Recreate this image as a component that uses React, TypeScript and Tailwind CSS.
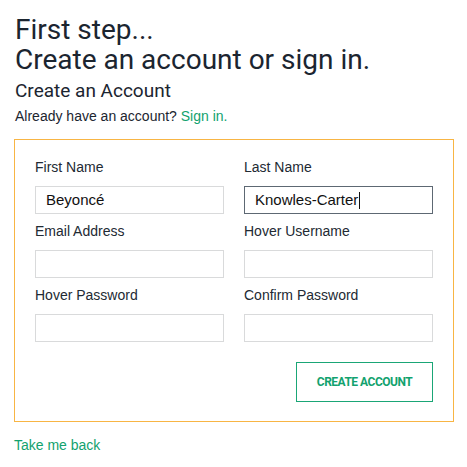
import React from "react";

const Field = ({ label, value, focused }: { label: string; value?: string; focused?: boolean }) => (
  <div className="flex flex-col">
    <div className="text-[14px] leading-[16px] text-[#222a33] mb-[11px]">{label}</div>
    <div
      className={
        "h-[28px] flex items-center pl-[10px] text-[15px] text-[#111] " +
        (focused ? "border border-[#5d6873]" : "border border-[#d9dadb]")
      }
    >
      {value}
      {focused && <span className="inline-block w-px h-[17px] bg-[#111] ml-px" />}
    </div>
  </div>
);

export default function App() {
  return (
    <div className="w-[467px] h-[467px] bg-white px-[14px] pt-[15px]" style={{ fontFamily: '"Liberation Sans", Arial, sans-serif' }}>
      <h1
        className="text-[28px] leading-[30px] text-[#1b2530]"
        style={{ fontFamily: 'Roboto, "Noto Sans", sans-serif' }}
      >
        <div className="pl-px">First step...</div>
        <div className="pl-px">Create an account or sign in.</div>
      </h1>
      <h2
        className="mt-[4px] text-[19px] leading-[24px] text-[#1b2530] pl-px"
        style={{ fontFamily: 'Roboto, "Noto Sans", sans-serif' }}
      >
        Create an Account
      </h2>
      <p className="mt-[5px] text-[14px] leading-[16px] text-[#1b2530] pl-px">
        Already have an account? <span className="text-[#12a26e]">Sign in.</span>
      </p>
      <div className="mt-[15px] w-[440px] border border-[#f8b544] px-[20px] pt-[19px] pb-[19px]">
        <div className="grid grid-cols-2 gap-x-[20px] gap-y-[9px]">
          <Field label="First Name" value="Beyoncé" />
          <Field label="Last Name" value="Knowles-Carter" focused />
          <Field label="Email Address" />
          <Field label="Hover Username" />
          <Field label="Hover Password" />
          <Field label="Confirm Password" />
        </div>
        <div className="flex justify-end mt-[20px]">
          <div
            className="w-[137px] h-[40px] border border-[#1aa676] flex items-center justify-center text-[12px] font-bold text-[#12a26e] tracking-[-0.5px]"
            style={{ fontFamily: 'Roboto, "Noto Sans", sans-serif' }}
          >
            CREATE ACCOUNT
          </div>
        </div>
      </div>
      <div className="mt-[15px] text-[14px] leading-[16px] text-[#12a26e]">Take me back</div>
    </div>
  );
}
